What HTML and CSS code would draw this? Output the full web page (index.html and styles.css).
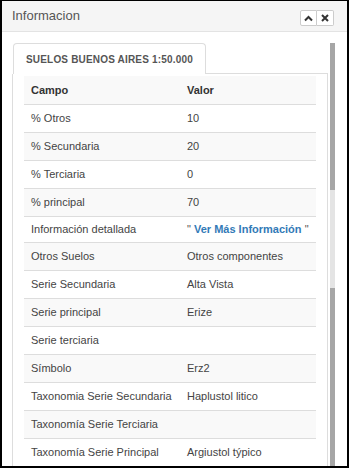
FILE: index.html
```html
<!DOCTYPE html>
<html lang="es">
<head>
  <meta charset="UTF-8">
  <title>Informacion</title>
  <link rel="stylesheet" href="styles.css">
</head>
<body>
  <div class="window">
    <div class="window-header">
      <span class="window-title">Informacion</span>
      <div class="window-tools">
        <button class="tool-btn" title="Minimizar">
          <svg width="9" height="7" viewBox="0 0 9 7"><path d="M1 5.5 L4.5 2 L8 5.5" fill="none" stroke="#333" stroke-width="2"/></svg>
        </button>
        <button class="tool-btn" title="Cerrar">
          <svg width="8" height="8" viewBox="0 0 8 8"><path d="M1 1 L7 7 M7 1 L1 7" fill="none" stroke="#333" stroke-width="2"/></svg>
        </button>
      </div>
    </div>

    <div class="window-body">
      <div class="scroll-area">
        <div class="scroll-content">
          <div class="tabs">
            <div class="tab active">SUELOS BUENOS AIRES 1:50.000</div>
            <div class="tab-fill"></div>
          </div>
          <div class="tab-panel">
            <table class="info-table">
              <tbody>
                <tr class="head"><td>Campo</td><td>Valor</td></tr>
                <tr><td>% Otros</td><td>10</td></tr>
                <tr><td>% Secundaria</td><td>20</td></tr>
                <tr><td>% Terciaria</td><td>0</td></tr>
                <tr><td>% principal</td><td>70</td></tr>
                <tr class="short"><td>Información detallada</td><td><span class="quote">"</span> <a href="#" class="more">Ver Más Información</a> <span class="quote">"</span></td></tr>
                <tr><td>Otros Suelos</td><td>Otros componentes</td></tr>
                <tr><td>Serie Secundaria</td><td>Alta Vista</td></tr>
                <tr><td>Serie principal</td><td>Erize</td></tr>
                <tr><td>Serie terciaria</td><td></td></tr>
                <tr><td>Símbolo</td><td>Erz2</td></tr>
                <tr><td>Taxonomia Serie Secundaria</td><td>Haplustol litico</td></tr>
                <tr><td>Taxonomía Serie Terciaria</td><td></td></tr>
                <tr><td>Taxonomía Serie Principal</td><td>Argiustol týpico</td></tr>
              </tbody>
            </table>
          </div>
        </div>
        <div class="scrollbar">
          <div class="thumb-top"></div>
          <div class="thumb-gap"></div>
          <div class="thumb-bottom"></div>
        </div>
      </div>
    </div>
  </div>
</body>
</html>
```

FILE: styles.css
```css
* {
  margin: 0;
  padding: 0;
  box-sizing: border-box;
}

body {
  font-family: "Liberation Sans", Arial, sans-serif;
  background: #ffffff;
}

.window {
  width: 349px;
  height: 468px;
  border: 2px solid #000;
  border-top-width: 1px;
  background: #fff;
  display: flex;
  flex-direction: column;
  overflow: hidden;
}

.window-header {
  height: 31px;
  flex-shrink: 0;
  display: flex;
  align-items: center;
  justify-content: space-between;
  padding: 0 13px 0 10px;
  background: #f5f5f5;
  border-bottom: 1px solid #e3e3e3;
}

.window-title {
  font-size: 13px;
  color: #555;
  margin-top: -2px;
}

.window-tools {
  display: flex;
  margin-top: 4px;
}

.tool-btn {
  width: 17px;
  height: 16px;
  display: flex;
  align-items: center;
  justify-content: center;
  background: #fff;
  border: 1px solid #ccc;
  cursor: pointer;
}

.tool-btn:first-child {
  border-radius: 2px 0 0 2px;
}

.tool-btn + .tool-btn {
  border-left: none;
  border-radius: 0 2px 2px 0;
}

.window-body {
  flex: 1;
  padding: 11px 12px 0 10px;
  min-height: 0;
}

.scroll-area {
  height: 100%;
  display: flex;
}

.scroll-content {
  flex: 1;
  overflow: hidden;
}

.scrollbar {
  width: 5px;
  margin-left: 2px;
  display: flex;
  flex-direction: column;
}

.thumb-top {
  height: 147px;
  background: #a6a6a6;
}

.thumb-gap {
  height: 98px;
  background: #e4e4e4;
}

.thumb-bottom {
  flex: 1;
  background: #a6a6a6;
}

.tabs {
  display: flex;
  align-items: flex-end;
}

.tab {
  height: 31px;
  padding: 0 12px;
  display: flex;
  align-items: center;
  font-size: 10px;
  font-weight: bold;
  letter-spacing: 0.18px;
  color: #555;
  border: 1px solid #ddd;
  border-bottom: none;
  border-radius: 4px 4px 0 0;
  background: #fff;
  margin-left: 1px;
}

.tab-fill {
  flex: 1;
  border-bottom: 1px solid #ddd;
}

.tab-panel {
  border-left: 1px solid #ddd;
  border-right: 1px solid #ddd;
  padding: 2px 11px 0 11px;
}

.info-table {
  width: 100%;
  border-collapse: collapse;
  font-size: 11px;
  color: #444;
}

.info-table td {
  height: 28px;
  padding: 0 7px;
  border-top: 1px solid #ddd;
  vertical-align: middle;
  white-space: nowrap;
}

.info-table td:first-child {
  width: 156px;
}

.info-table tr:first-child td {
  border-top: none;
}

.info-table tr:nth-child(odd) {
  background: #f9f9f9;
}

.info-table tr.head td {
  font-weight: bold;
  color: #333;
}

.info-table tr.short td {
  height: 26px;
}

.quote {
  color: #555;
}

.more {
  color: #337ab7;
  font-weight: bold;
  text-decoration: none;
}
```
